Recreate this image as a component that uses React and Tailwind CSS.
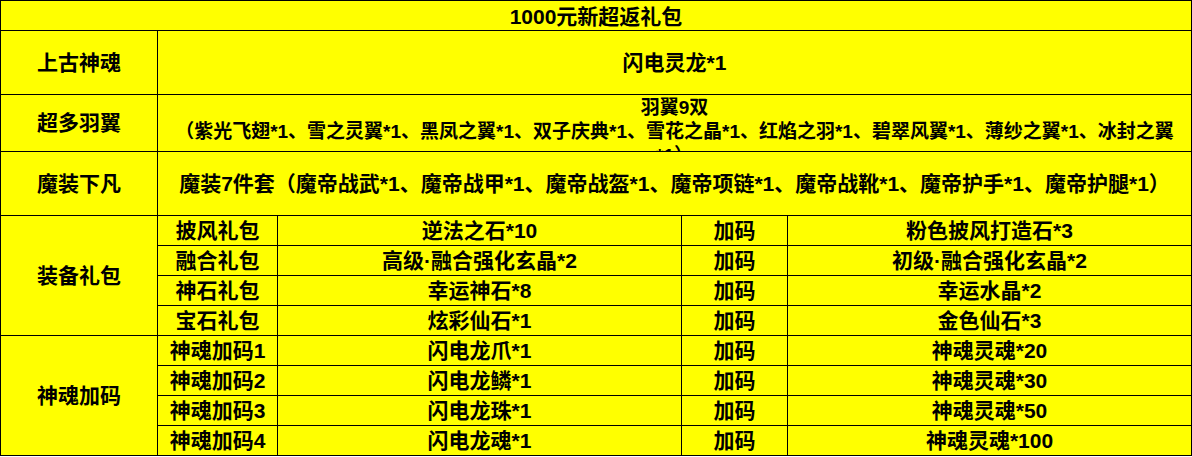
import React from "react";

const cell = "bg-[#ffff00] flex items-center justify-center text-black text-[21px] font-bold whitespace-nowrap overflow-hidden";

const equip = [
  ["披风礼包", "逆法之石*10", "加码", "粉色披风打造石*3"],
  ["融合礼包", "高级·融合强化玄晶*2", "加码", "初级·融合强化玄晶*2"],
  ["神石礼包", "幸运神石*8", "加码", "幸运水晶*2"],
  ["宝石礼包", "炫彩仙石*1", "加码", "金色仙石*3"],
];

const soul = [
  ["神魂加码1", "闪电龙爪*1", "加码", "神魂灵魂*20"],
  ["神魂加码2", "闪电龙鳞*1", "加码", "神魂灵魂*30"],
  ["神魂加码3", "闪电龙珠*1", "加码", "神魂灵魂*50"],
  ["神魂加码4", "闪电龙魂*1", "加码", "神魂灵魂*100"],
];

function SubRows({ title, rows }) {
  return (
    <>
      <div className={`${cell} row-span-4`}>{title}</div>
      {rows.map((r, i) => (
        <React.Fragment key={i}>
          <div className={cell}>{r[0]}</div>
          <div className={cell}>{r[1]}</div>
          <div className={cell}>{r[2]}</div>
          <div className={cell}>{r[3]}</div>
        </React.Fragment>
      ))}
    </>
  );
}

export default function App() {
  return (
    <div className="w-[1192px] h-[457px] bg-white font-['Liberation_Sans','Noto_Sans_CJK_SC',sans-serif]">
      <div className="grid w-[1192px] grid-cols-[156px_119px_403px_105px_403px] grid-rows-[29px_63px_56px_63px_repeat(8,29px)] gap-px bg-black p-px">
        <div className={`${cell} col-span-5 bg-[#92d050] pt-[2px]`}>1000元新超返礼包</div>

        <div className={cell}>上古神魂</div>
        <div className={`${cell} col-span-4`}>闪电灵龙*1</div>

        <div className={cell}>超多羽翼</div>
        <div className="col-span-4 overflow-hidden bg-[#ffff00] pt-px text-center text-[19px] font-bold leading-[24px] text-black whitespace-nowrap">
          <div>羽翼9双</div>
          <div>（紫光飞翅*1、雪之灵翼*1、黑凤之翼*1、双子庆典*1、雪花之晶*1、红焰之羽*1、碧翠风翼*1、薄纱之翼*1、冰封之翼</div>
          <div>*1）</div>
        </div>

        <div className={cell}>魔装下凡</div>
        <div className={`${cell} col-span-4`}>魔装7件套（魔帝战武*1、魔帝战甲*1、魔帝战盔*1、魔帝项链*1、魔帝战靴*1、魔帝护手*1、魔帝护腿*1）</div>

        <SubRows title="装备礼包" rows={equip} />
        <SubRows title="神魂加码" rows={soul} />
      </div>
    </div>
  );
}
